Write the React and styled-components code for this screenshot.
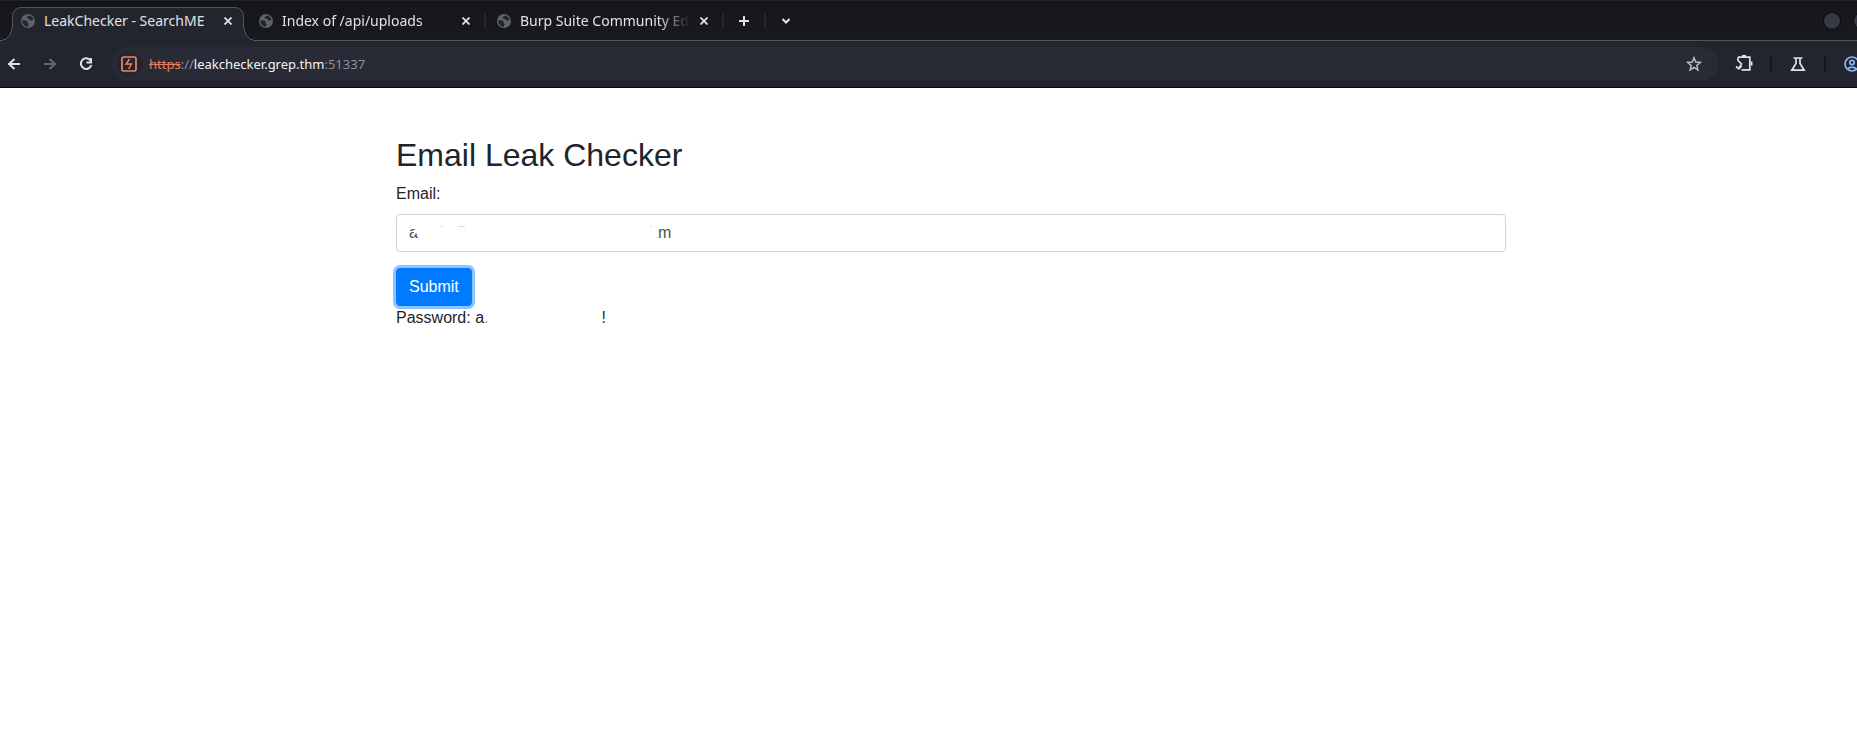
import React, { useState } from "react";
import styled, { createGlobalStyle, css } from "styled-components";

const Global = createGlobalStyle`
  *, *::before, *::after { box-sizing: border-box; }
  body { margin: 0; background: #fff; overflow-x: hidden; }
`;

const Chrome = styled.header`
  overflow: hidden;
  background: #22242e;
  border-bottom: 1px solid #08080c;
  font-family: "Noto Sans", sans-serif;
  color: #e2e2e4;
`;

const TabStrip = styled.div`
  display: flex;
  align-items: flex-end;
  height: 41px;
  padding-left: 9px;
  border-bottom: 1px solid #55565b;
  background: linear-gradient(#22242a 0, #22242a 1px, #15161a 1px, #191a1e 40px);
`;

const IconButton = styled.button`
  display: flex;
  align-items: center;
  justify-content: center;
  flex: none;
  width: ${(p) => p.$size || 20}px;
  height: ${(p) => p.$size || 20}px;
  padding: 0;
  border: 0;
  background: none;
  color: ${(p) => p.$color || "#e2e2e4"};
`;

const Tab = styled.div`
  position: relative;
  display: flex;
  align-items: center;
  flex: none;
  width: 238px;
  height: 34px;
  margin-bottom: -1px;
  padding: 0 9px 6px 12px;
  ${(p) =>
    p.$active &&
    css`
      width: 232px;
      margin: 0 3px -1px;
      padding: 0 5px 7px 8px;
      border: 1px solid #55565b;
      border-bottom: 0;
      border-radius: 9px 9px 0 0;
      background: #22242e;
      &::before,
      &::after {
        content: "";
        position: absolute;
        bottom: 0;
        width: 13px;
        height: 12px;
      }
      &::before {
        left: -13px;
        background: radial-gradient(circle at 0 0, transparent 11px, #55565b 11px, #55565b 12px, #22242e 12px);
      }
      &::after {
        right: -13px;
        background: radial-gradient(circle at 100% 0, transparent 11px, #55565b 11px, #55565b 12px, #22242e 12px);
      }
    `}
`;

const TabTitle = styled.span`
  flex: 1;
  min-width: 0;
  margin: 0 4px 0 9px;
  overflow: hidden;
  white-space: nowrap;
  font-size: 14px;
  line-height: 22px;
  ${(p) => !p.$active && "mask-image: linear-gradient(to left, transparent 0, #000 32px);"}
`;

const Separator = styled.span`
  flex: none;
  width: 2px;
  height: 16px;
  background: ${(p) => p.$color || "#25262d"};
`;

const StripTools = styled.div`
  display: flex;
  align-items: center;
  gap: 10px;
  height: 28px;
  margin: 0 0 5px 11px;
`;

const TabSeparator = styled(Separator)`
  margin: 0 -1px 11px;
`;

const WindowDots = styled.div`
  display: flex;
  gap: 12px;
  margin: 0 -14px 10px auto;
`;

const WindowDot = styled.button`
  width: 18px;
  height: 18px;
  padding: 0;
  border: 1px solid #08090c;
  border-radius: 50%;
  background: #363a47;
`;

const Toolbar = styled.div`
  display: flex;
  align-items: center;
  height: 46px;
  padding: 0 0 0 4px;
`;

const NavButtons = styled.nav`
  display: flex;
  gap: 16px;
`;

const AddressBar = styled.form`
  display: flex;
  align-items: center;
  flex: 1;
  height: 34px;
  margin-left: 16px;
  padding: 0 14px 0 4px;
  border-radius: 17px;
  background: #282a36;
`;

const SiteBadge = styled(IconButton)`
  border-radius: 50%;
  background: #22242e;
`;

const Url = styled.a`
  flex: 1;
  margin-left: 7px;
  font-size: 13px;
  line-height: 22px;
  text-decoration: none;
  color: #8f9098;
`;

const Scheme = styled.s`
  color: #e8805a;
`;

const Host = styled.span`
  color: #f4f4f5;
`;

const Actions = styled.div`
  display: flex;
  align-items: center;
  gap: 14px;
  margin: 0 -7px 0 14px;
`;

const Main = styled.main`
  padding: 48px 0 0 45px;
  font-family: "Liberation Sans", Arial, sans-serif;
  font-size: 16px;
  line-height: 24px;
  color: #212529;
`;

const Container = styled.div`
  max-width: 1140px;
  margin: 0 auto;
  padding: 0 15px;
`;

const Heading = styled.h2`
  margin: 0 0 8px;
  font-size: 32px;
  font-weight: 500;
  line-height: 38px;
`;

const Label = styled.label`
  display: block;
  margin-bottom: 8px;
`;

const Field = styled.div`
  position: relative;
  margin-bottom: 16px;
`;

const TextInput = styled.input`
  display: block;
  width: 100%;
  height: 38px;
  padding: 6px 12px;
  border: 1px solid #ced4da;
  border-radius: 4px;
  background: #fff;
  color: #495057;
  font: inherit;
`;

const Remnants = styled.svg`
  position: absolute;
  left: 0;
  top: 0;
  pointer-events: none;
`;

const Submit = styled.button`
  display: block;
  height: 38px;
  padding: 6px 12px;
  border: 1px solid #007bff;
  border-radius: 4px;
  background: #007bff;
  box-shadow: 0 0 0 3px #8cc4ff;
  color: #fff;
  font: inherit;
`;

const Result = styled.div`
  display: flex;
  gap: 113px;
`;

const Dim = styled.span`
  color: #9a9da0;
`;

const Globe = () => (
  <svg width="14" height="14" viewBox="0 0 14 14">
    <circle cx="7" cy="7" r="7" fill="#606368" />
    <path d="M8 1.4 5.6 3.2l.2 1.4 2.2.2 1 1.6h2.2l1.4-.8A6 6 0 0 0 8 1.4ZM1.3 6.3l4.2.2 1.3 1.4-.2 1.5 1.2.6-1 2.7A6 6 0 0 1 1.3 6.3Z" fill="#24262d" />
  </svg>
);

const Icon = ({ children, size = 16, width = 2 }) => (
  <svg width={size} height={size} viewBox={`0 0 ${size} ${size}`} fill="none" stroke="currentColor" strokeWidth={width}>
    {children}
  </svg>
);

const tabs = [
  { title: "LeakChecker - SearchME", active: true },
  { title: "Index of /api/uploads" },
  { title: "Burp Suite Community Ed" },
];

export default function App() {
  const [email, setEmail] = useState("a" + "\u00a0".repeat(54) + "m");
  return (
    <>
      <Global />
      <Chrome>
        <TabStrip>
          {tabs.map((t) => (
            <React.Fragment key={t.title}>
              <Tab $active={t.active}>
                <Globe />
                <TabTitle $active={t.active}>{t.title}</TabTitle>
                <IconButton aria-label="Close tab">
                  <Icon size={8} width={1.8}><path d="m.5.5 7 7m0-7-7 7" /></Icon>
                </IconButton>
              </Tab>
              {!t.active && <TabSeparator />}
            </React.Fragment>
          ))}
          <StripTools>
            <IconButton aria-label="New tab">
              <Icon size={10}><path d="M5 0v10M0 5h10" /></Icon>
            </IconButton>
            <Separator />
            <IconButton aria-label="Search tabs">
              <Icon size={8}><path d="m.5 2 3.5 3.5L7.500 2" /></Icon>
            </IconButton>
          </StripTools>
          <WindowDots>
            <WindowDot aria-label="Minimize" />
            <WindowDot aria-label="Maximize" />
          </WindowDots>
        </TabStrip>
        <Toolbar>
          <NavButtons>
            <IconButton aria-label="Back">
              <Icon><path d="M14 8H3m5.500-5L3 8l5.500 5" /></Icon>
            </IconButton>
            <IconButton aria-label="Forward" $color="#66686f">
              <Icon><path d="M2 8h11M7.500 3 13 8l-5.500 5" /></Icon>
            </IconButton>
            <IconButton aria-label="Reload">
              <Icon><path d="M12.500 4.500A5.300 5.300 0 1 0 13.300 9M13 2v4.500H8.500" /></Icon>
            </IconButton>
          </NavButtons>
          <AddressBar>
            <SiteBadge type="button" $size={26} $color="#f0875f" aria-label="Site information">
              <Icon size={16} width={1.7}><rect x="1" y="1" width="14" height="14" rx="1.500" /><path d="M8.500 3 5 8h5.500L7.500 13" strokeWidth="1.400" /></Icon>
            </SiteBadge>
            <Url href="#">
              <Scheme>https</Scheme>://<Host>leakchecker.grep.thm</Host>:51337
            </Url>
            <IconButton type="button" $color="#b9b9be" aria-label="Bookmark this tab">
              <Icon width={1.5}><path d="m8 1.800 1.700 4.300 4.600.3-3.500 3 1.100 4.500L8 11.500l-3.900 2.400 1.100-4.500-3.500-3 4.600-.3Z" /></Icon>
            </IconButton>
          </AddressBar>
          <Actions>
            <IconButton $size={24} aria-label="Extensions">
              <Icon size={18}><path d="M3 2.200h11.800v12.600H6.500M3 2.200v3.300l3.500 3.300L3.800 13.500M1 11.500l2.800 2.300 3-2.800" strokeWidth="1.700" /><path d="M9 0v2M15.500 8.500h2" strokeWidth="4" /></Icon>
            </IconButton>
            <Separator $color="#15161b" />
            <IconButton $size={24} aria-label="Chrome Labs">
              <Icon><path d="M3.500 2h9M6 2v5.500L1.800 14.200h12.400L10 7.500V2" strokeWidth="1.700" /></Icon>
            </IconButton>
            <Separator $color="#15161b" />
            <IconButton $size={24} $color="#8ab4f8" aria-label="Profile">
              <Icon width={1.7}><circle cx="8" cy="8" r="7" /><circle cx="8" cy="6.500" r="2.200" /><path d="M3.500 13c2.500-2.500 6.500-2.500 9 0" /></Icon>
            </IconButton>
          </Actions>
        </Toolbar>
      </Chrome>
      <Main>
        <Container>
          <Heading>Email Leak Checker</Heading>
          <form onSubmit={(e) => e.preventDefault()}>
            <Label htmlFor="email">Email:</Label>
            <Field>
              <TextInput id="email" value={email} onChange={(e) => setEmail(e.target.value)} />
              <Remnants width="280" height="38" aria-hidden="true">
                <path d="M18 17.500h4" stroke="#fff" strokeWidth="4" />
                <path d="M45 12.500h2M62 12.500h7M254 12.500h2M260 23.500h2" stroke="#d5d7d9" />
              </Remnants>
            </Field>
            <Submit type="submit">Submit</Submit>
          </form>
          <Result>
            <span>Password: a<Dim>.</Dim></span>
            <span>!</span>
          </Result>
        </Container>
      </Main>
    </>
  );
}
